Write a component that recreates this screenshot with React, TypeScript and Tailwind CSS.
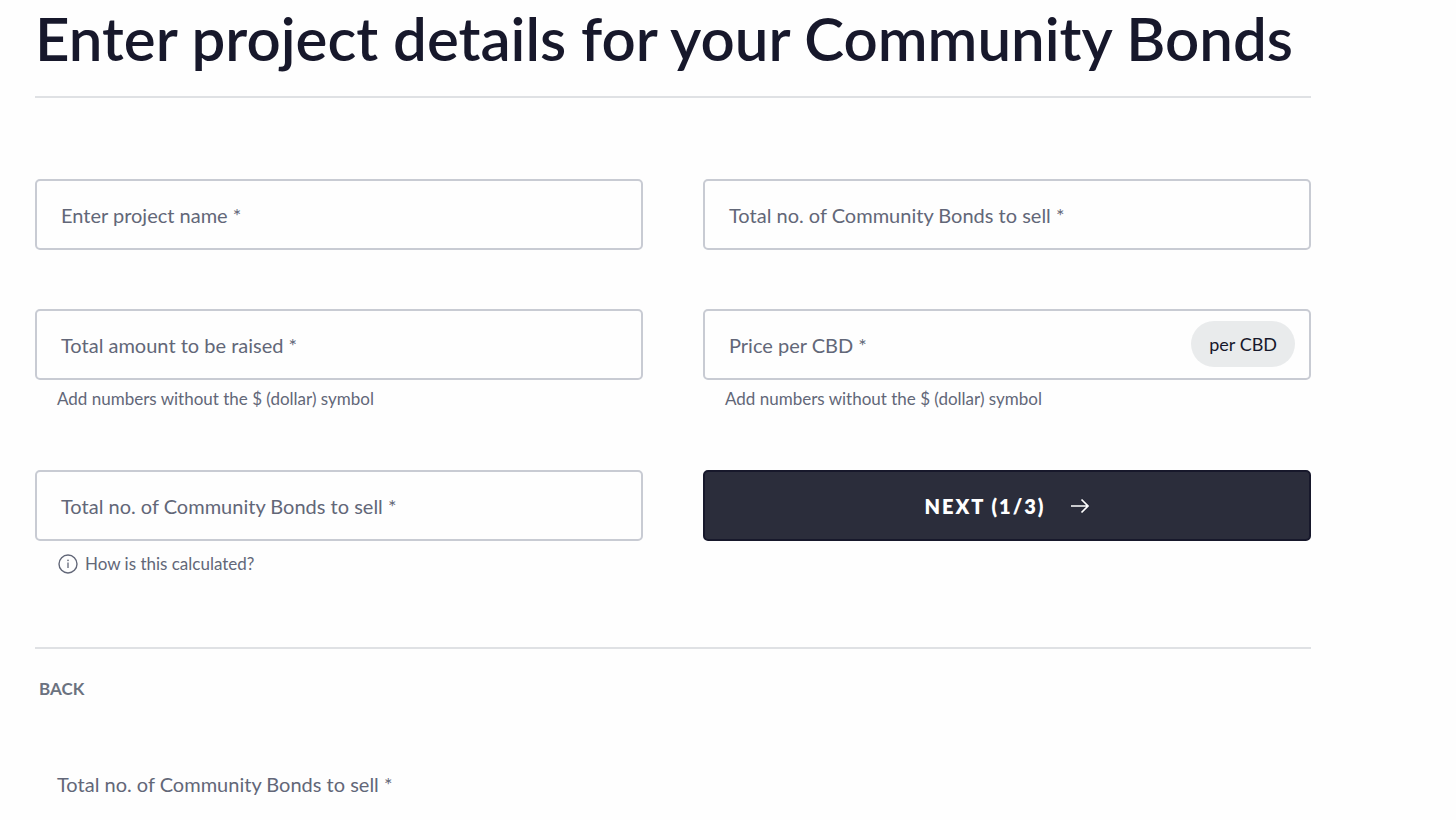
import React, { useState } from "react";

type FieldProps = {
  id: string;
  label: string;
  value: string;
  onChange: (value: string) => void;
  suffix?: string;
  children?: React.ReactNode;
};

const Field = ({ id, label, value, onChange, suffix, children }: FieldProps) => {
  return (
    <div>
      <div className="relative">
        <input
          id={id}
          type="text"
          placeholder=" "
          value={value}
          onChange={(e) => onChange(e.target.value)}
          className="peer block h-[71px] w-full rounded-[5px] border-2 border-[#c8cbd3] bg-transparent px-6 text-xl text-[#17182b] outline-none focus:border-[#2b2d3b]"
        />
        <label
          htmlFor={id}
          className="pointer-events-none absolute -top-3 left-5 bg-[#fefefe] px-1.5 text-sm leading-6 text-[#626778] peer-placeholder-shown:top-6 peer-placeholder-shown:bg-transparent peer-placeholder-shown:text-xl peer-placeholder-shown:leading-6"
        >
          {label}
        </label>
        {suffix && (
          <span className="absolute top-3 right-4 flex h-[46px] items-center rounded-full bg-[#e9ebec] px-[18px] text-lg text-[#17182b]">
            {suffix}
          </span>
        )}
      </div>
      {children}
    </div>
  );
};

const Hint = () => (
  <p className="mt-[7px] pl-[22px] text-[17px] leading-6">
    Add numbers without the $ (dollar) symbol
  </p>
);

const App = () => {
  const [form, setForm] = useState({
    name: "",
    bonds: "",
    amount: "",
    price: "",
    total: "",
  });

  const update = (key: keyof typeof form) => (value: string) =>
    setForm({ ...form, [key]: value });

  return (
    <main className="min-h-screen bg-[#fefefe] pr-[145px] pl-[35px] font-['Lato',sans-serif] text-[#626778]">
      <h1 className="border-b-2 border-[#dfe1e4] pb-5 text-[60px] leading-[76px] font-semibold whitespace-nowrap text-[#17182b]">
        Enter project details for your Community Bonds
      </h1>

      <form
        onSubmit={(e) => e.preventDefault()}
        className="grid grid-cols-2 gap-x-[60px] gap-y-[59px] border-b-2 border-[#dfe1e4] pt-[81px] pb-[71px]"
      >
        <Field
          id="name"
          label="Enter project name *"
          value={form.name}
          onChange={update("name")}
        />
        <Field
          id="bonds"
          label="Total no. of Community Bonds to sell *"
          value={form.bonds}
          onChange={update("bonds")}
        />
        <Field
          id="amount"
          label="Total amount to be raised *"
          value={form.amount}
          onChange={update("amount")}
        >
          <Hint />
        </Field>
        <Field
          id="price"
          label="Price per CBD *"
          value={form.price}
          onChange={update("price")}
          suffix="per CBD"
        >
          <Hint />
        </Field>
        <Field
          id="total"
          label="Total no. of Community Bonds to sell *"
          value={form.total}
          onChange={update("total")}
        >
          <a href="#calculation" className="mt-[11px] ml-[22px] flex items-center gap-1.5 text-[17px] leading-6">
            <svg width="22" height="22" viewBox="0 0 22 22" fill="none" stroke="currentColor">
              <circle cx="11" cy="11" r="9" strokeWidth="1.4" />
              <path d="M11 9.6V15" strokeWidth="1.3" />
              <circle cx="11" cy="7.4" r="0.8" fill="currentColor" stroke="none" />
            </svg>
            How is this calculated?
          </a>
        </Field>
        <button
          type="submit"
          className="flex h-[71px] items-center justify-center gap-6 rounded-[5px] border-2 border-[#17182b] bg-[#2b2d3b] text-xl font-extrabold tracking-widest text-white"
        >
          NEXT (1/3)
          <svg width="20" height="20" viewBox="0 0 20 20" fill="none" stroke="currentColor" strokeWidth="1.7">
            <path d="M1 10H18M11.5 3.5L18 10L11.5 16.5" />
          </svg>
        </button>
      </form>

      <button type="button" className="mt-7 ml-1 block text-[17px] leading-6 font-bold text-[#6b7280]">
        BACK
      </button>

      <p className="mt-[71px] pl-[22px] text-xl leading-6">
        Total no. of Community Bonds to sell *
      </p>
    </main>
  );
};

export default App;
